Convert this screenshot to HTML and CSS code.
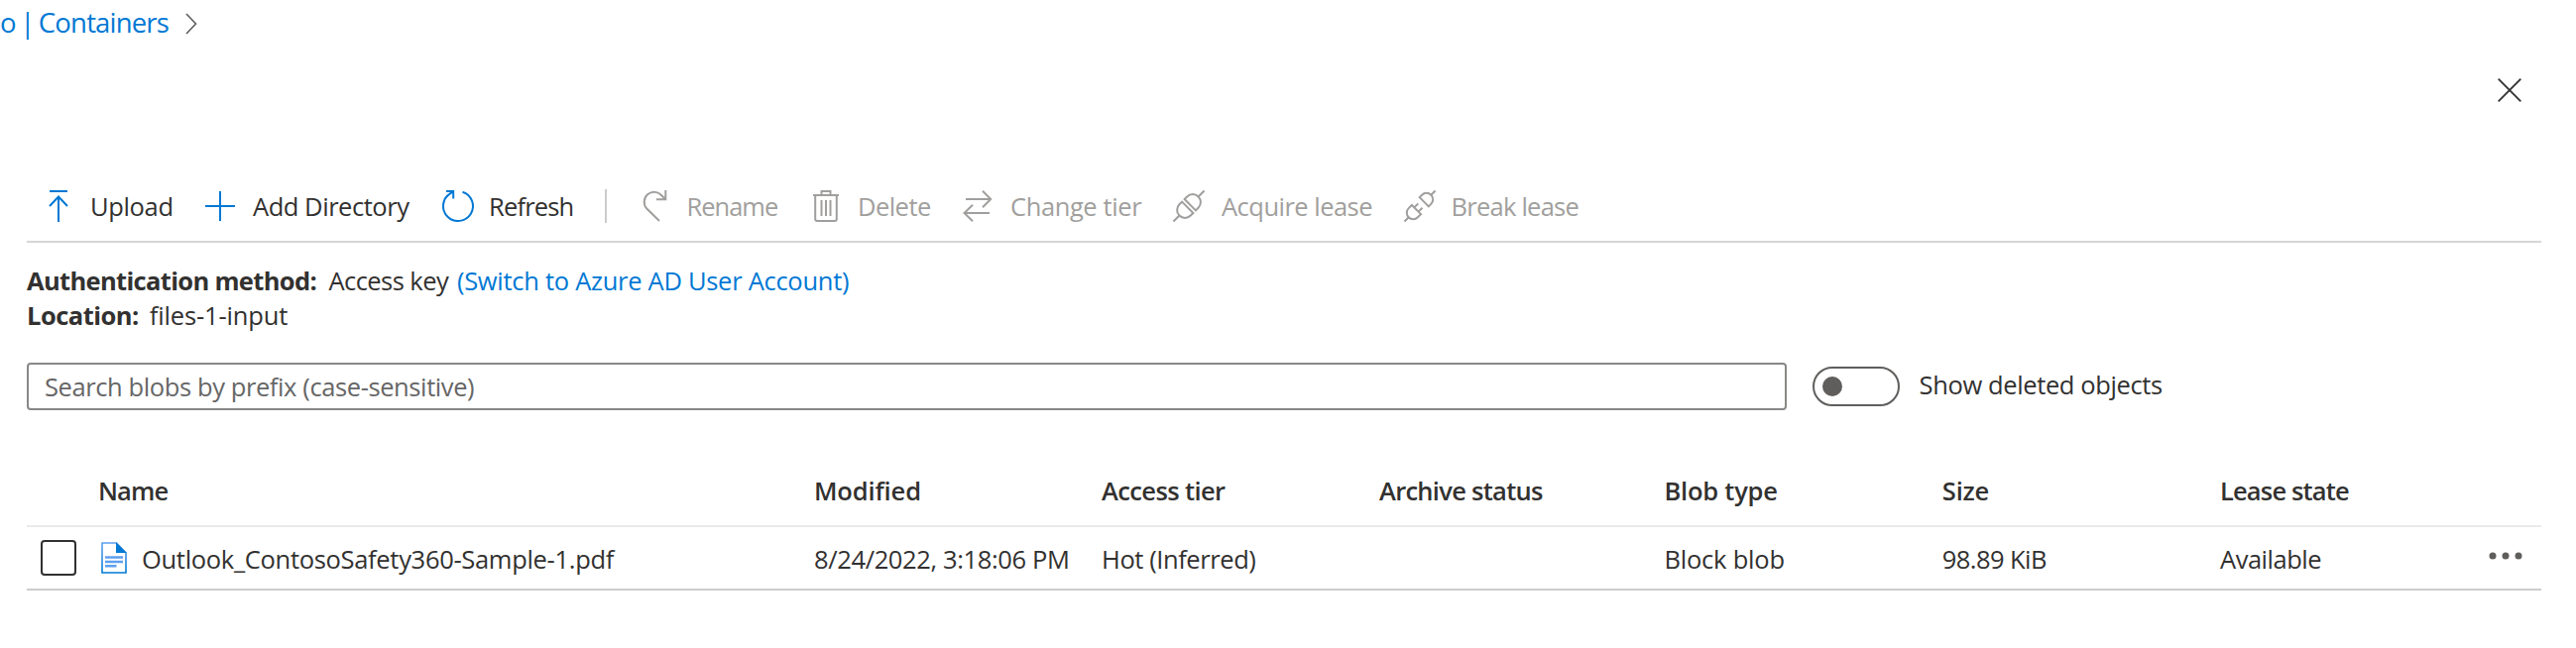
FILE: index.html
```
<!DOCTYPE html>
<html lang="en">
<head>
<meta charset="utf-8">
<title>Containers</title>
<link rel="stylesheet" href="styles.css">
</head>
<body>
<nav class="breadcrumb">
  <a class="crumb">o | Containers</a>
  <svg class="chevron" width="12" height="22" viewBox="0 0 12 22"><path d="M1 1l9.5 10L1 21"/></svg>
</nav>
<header class="blade-head">
  <svg class="close" width="24" height="24" viewBox="0 0 24 24"><path d="M.7.7l22.6 22.6M23.3.7L.7 23.3"/></svg>
</header>
<main class="blade">
  <div class="toolbar">
    <button class="cmd upload"><svg width="32" height="32" viewBox="0 0 32 32"><path d="M7 1h18M16 32V6.500M7 16l9-9.500 9 9.500"/></svg><span>Upload</span></button>
    <button class="cmd add"><svg width="32" height="32" viewBox="0 0 32 32"><path d="M16 1v30M1 16h30"/></svg><span>Add Directory</span></button>
    <button class="cmd refresh"><svg width="32" height="32" viewBox="0 0 32 32"><path d="M20.500 1.700A15 15 0 1 1 8 3.300Q10 2.200 11 1M4 1h7.200v7.500"/></svg><span>Refresh</span></button>
    <i class="divider"></i>
    <button class="cmd off rename"><svg width="32" height="32" viewBox="0 0 32 32"><path d="M18 31L5 18.200A10 10 0 1 1 20.500 5.500L24 9M24.300 0v9.300H15"/></svg><span>Rename</span></button>
    <button class="cmd off delete"><svg width="32" height="32" viewBox="0 0 32 32"><path d="M3 5h26M11.500 5V1h9v4M5.200 5v24q0 2 2 2h17.600q2 0 2-2V5M11.500 10v16M16 10v16M20.500 10v16"/></svg><span>Delete</span></button>
    <button class="cmd off tier"><svg width="32" height="32" viewBox="0 0 32 32"><path d="M4 9h25M21 .8L29.200 9 21 17.200M28 23H2.500M11 14.800L2.500 23l8.500 8.200"/></svg><span>Change tier</span></button>
    <button class="cmd off acquire"><svg width="32" height="32" viewBox="0 0 32 32"><g transform="translate(16 16) rotate(-45)"><path d="M1.800-8V8H5.500A8 8 0 0 0 5.500-8ZM13.500 0H22M-1.800-8V8H-5.500A8 8 0 0 1-5.500-8ZM-13.500 0H-22"/></g></svg><span>Acquire lease</span></button>
    <button class="cmd off break"><svg width="32" height="32" viewBox="0 0 32 32"><g transform="translate(16 16) rotate(-45)"><path d="M6-6.500V6.500H9.500A6.500 6.500 0 0 0 9.500-6.500ZM16 0H22M-5-7.500V7.500M-5-6.500H-9.500A6.500 6.500 0 0 0-9.500 6.500H-5M-16 0H-22M-5-3H.5M-5 3H.5"/></g></svg><span>Break lease</span></button>
  </div>
  <section class="facts">
    <div class="fact"><b class="auth-label">Authentication method:</b><span class="auth-value">Access key</span><a class="switch">(Switch to Azure AD User Account)</a></div>
    <div class="fact"><b class="loc-label">Location:</b><span class="loc-value">files-1-input</span></div>
  </section>
  <div class="filter">
    <div class="search">Search blobs by prefix (case-sensitive)</div>
    <div class="toggle"><i class="knob"></i></div>
    <span class="toggle-label">Show deleted objects</span>
  </div>
  <div class="table">
    <div class="row head">
      <span></span>
      <span class="h-name">Name</span>
      <span class="h-modified">Modified</span>
      <span class="h-tier">Access tier</span>
      <span class="h-archive">Archive status</span>
      <span class="h-type">Blob type</span>
      <span class="h-size">Size</span>
      <span class="h-lease">Lease state</span>
      <span></span>
    </div>
    <div class="row item">
      <i class="checkbox"></i>
      <span class="file">
        <svg class="doc" width="26" height="32" viewBox="0 0 26 32"><defs><linearGradient id="edge" x1="0" y1="0" x2="0" y2="1"><stop offset="0" stop-color="#5ea0ef"/><stop offset="1" stop-color="#0078d4"/></linearGradient></defs><path d="M1 1h14.500L25 11v20H1z" fill="#fff" stroke="url(#edge)" stroke-width="1.600"/><path d="M15 .3L25.800 11H15z" fill="#0078d4"/><path d="M4 15.500h18M4 20h18M4 24.300h11.500" fill="none" stroke="#5ea0ef" stroke-width="2.400"/></svg>
        <span class="c-name">Outlook_ContosoSafety360-Sample-1.pdf</span>
      </span>
      <span class="c-modified">8/24/2022, 3:18:06 PM</span>
      <span class="c-tier">Hot (Inferred)</span>
      <span></span>
      <span class="c-type">Block blob</span>
      <span class="c-size">98.89 KiB</span>
      <span class="c-lease">Available</span>
      <svg class="more" width="34" height="8" viewBox="0 0 34 8"><circle cx="4" cy="4" r="3.500"/><circle cx="17" cy="4" r="3.500"/><circle cx="30" cy="4" r="3.500"/></svg>
    </div>
  </div>
</main>
</body>
</html>
```
FILE: styles.css
```
* { box-sizing: border-box; }
body {
  margin: 0;
  background: #fff;
  color: #323130;
  font: 25.5px/36px "Open Sans", "Noto Sans", sans-serif;
  white-space: nowrap;
}
svg { display: block; flex: none; overflow: visible; }
a { color: #0078d4; }

.breadcrumb { display: flex; align-items: center; height: 46px; }
.crumb { width: 187px; font-size: 27.5px; letter-spacing: -.82px; word-spacing: -1.9px; }
.chevron { margin-top: 2px; }
.chevron path { fill: none; stroke: #605e5c; stroke-width: 1.6; }

.blade-head { display: flex; justify-content: flex-end; height: 126px; padding: 33px 55px 0 0; }
.close path { fill: none; stroke: #323130; stroke-width: 1.8; }

.blade { margin: 0 35px 0 27px; }

.toolbar { display: flex; align-items: center; height: 73px; padding-left: 16px; border-bottom: 2px solid #d6d6d6; }
.cmd { display: flex; align-items: center; padding: 0; border: 0; background: none; color: inherit; font: inherit; }
.cmd path { fill: none; stroke: #0078d4; stroke-width: 2; }
.cmd.off { color: #a19f9d; }
.cmd.off path { stroke: #a19f9d; }
.upload { width: 163px; gap: 16px; letter-spacing: -.35px; }
.add { width: 240px; gap: 17px; letter-spacing: -.46px; }
.refresh { width: 164px; gap: 15px; letter-spacing: -.83px; }
.divider { width: 2px; height: 34px; background: #ccc; }
.rename { width: 170px; margin-left: 35px; gap: 13.5px; letter-spacing: -1px; }
.delete { width: 153px; gap: 16px; letter-spacing: -.55px; }
.tier { width: 213px; gap: 17px; letter-spacing: -.4px; }
.acquire { width: 233px; gap: 17px; letter-spacing: -.52px; }
.break { gap: 15.5px; letter-spacing: -.75px; }

.facts { margin-top: 21px; line-height: 35.4px; }
.fact { display: flex; }
.auth-label { width: 304.4px; letter-spacing: -.66px; }
.auth-value { width: 129.5px; letter-spacing: -.55px; }
.switch { letter-spacing: -.28px; }
.loc-label { width: 123.8px; letter-spacing: -.51px; }
.loc-value { letter-spacing: -.15px; }

.filter { display: flex; align-items: center; margin-top: 29.2px; }
.search { width: 1775px; height: 48px; padding: 4px 16px; border: 2px solid #8a8886; border-radius: 4px; color: #666; letter-spacing: -.4px; }
.toggle { display: flex; align-items: center; width: 88px; height: 40px; margin-left: 26px; padding-left: 8px; border: 2px solid #605e5c; border-radius: 20px; }
.knob { width: 20px; height: 20px; border-radius: 50%; background: #605e5c; }
.toggle-label { margin-left: 19.6px; padding-bottom: 4px; letter-spacing: -.38px; }

.table { margin-top: 46px; }
.row { display: grid; grid-template-columns: 72px 722px 290px 280px 287.5px 280.3px 280.2px 271px 1fr; align-items: center; }
.head { height: 72px; border-bottom: 2px solid #eaeaea; font-weight: 600; }
.item { height: 64px; border-bottom: 2px solid #ccc; }
.item > span { padding-top: 1px; }
.checkbox { width: 36px; height: 36px; margin-left: 14px; border: 2px solid #323130; border-radius: 4px; }
.file { display: flex; align-items: center; gap: 15px; padding-left: 3px; }
.doc { margin-top: -1px; }
.more { margin-top: -4px; }
.more circle { fill: #605e5c; }

.h-name { letter-spacing: -.9px; }
.h-modified { letter-spacing: -.13px; }
.h-tier { letter-spacing: -.62px; }
.h-archive { letter-spacing: -.72px; }
.h-type { letter-spacing: -.24px; }
.h-size { letter-spacing: -.17px; }
.h-lease { letter-spacing: -.84px; }
.c-name { letter-spacing: -.31px; }
.c-modified { letter-spacing: -.36px; }
.c-tier { letter-spacing: -.42px; }
.c-type { letter-spacing: -.21px; }
.c-size { letter-spacing: -.57px; }
.c-lease { letter-spacing: -.47px; }
```
